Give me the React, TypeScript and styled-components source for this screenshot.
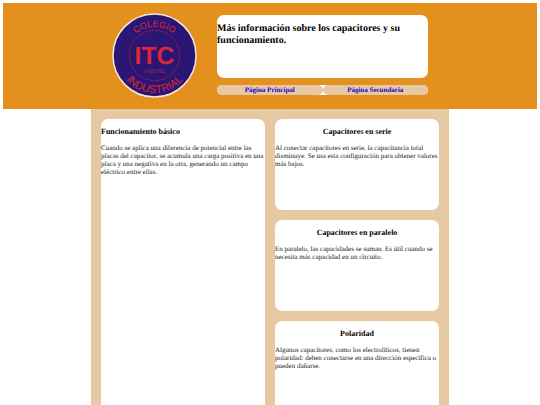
import React from "react";
import styled, { createGlobalStyle } from "styled-components";

const GlobalStyle = createGlobalStyle`
  * { box-sizing: border-box; }
  body {
    margin: 3px 3px 0;
    background: #fff;
    color: #000;
    font-family: "Liberation Serif", "Times New Roman", serif;
    font-size: 7px;
    text-rendering: geometricPrecision;
  }
`;

const Header = styled.header`
  background: #e4901d;
  padding: 10px 0 11px;
`;

const HeaderInner = styled.div`
  display: grid;
  grid-template-columns: 95fr 211fr;
  column-gap: 10px;
  width: 100%;
  max-width: 316px;
  margin: 0 auto;
`;

const Logo = styled.svg`
  display: block;
  width: 85px;
  height: 85px;
  justify-self: start;
`;

const HeaderContent = styled.div`
  display: flex;
  flex-direction: column;
  gap: 7px;
  padding-top: 2px;
`;

const TitleBox = styled.div`
  min-height: 63px;
  padding-top: 8px;
  border-radius: 7px;
  background: #fff;
`;

const Title = styled.h1`
  margin: 0;
  font-size: 10px;
  line-height: 12px;
`;

const Nav = styled.nav`
  display: grid;
  grid-template-columns: 1fr 1fr;
  border-radius: 5px;
  background: #fff;
`;

const NavLink = styled.a`
  border-radius: 5px;
  background: #e6c8a2;
  color: #1a00d0;
  font-weight: bold;
  line-height: 10px;
  text-align: center;
  text-decoration: none;
`;

const Main = styled.main`
  display: grid;
  grid-template-columns: 1fr 1fr;
  gap: 10px;
  align-items: stretch;
  width: 100%;
  max-width: 358px;
  margin: 0 auto;
  padding: 10px;
  background: #e6c8a2;
`;

const Column = styled.div`
  display: flex;
  flex-direction: column;
  gap: 10px;
`;

const Card = styled.article<{ $fill?: boolean }>`
  flex: ${(p) => (p.$fill ? "1" : "none")};
  min-height: 91px;
  padding-top: 8px;
  border-radius: 7px;
  background: #fff;
`;

const CardTitle = styled.h2<{ $centered?: boolean }>`
  margin: 0 0 7px;
  font-size: 8px;
  line-height: 10px;
  text-align: ${(p) => (p.$centered ? "center" : "left")};
`;

const CardText = styled.p`
  margin: 0;
  color: #222;
  line-height: 8px;
`;

const topics = [
  {
    title: "Capacitores en serie",
    text: "Al conectar capacitores en serie, la capacitancia total disminuye. Se usa esta configuración para obtener valores más bajos.",
  },
  {
    title: "Capacitores en paralelo",
    text: "En paralelo, las capacidades se suman. Es útil cuando se necesita más capacidad en un circuito.",
  },
  {
    title: "Polaridad",
    text: "Algunos capacitores, como los electrolíticos, tienen polaridad: deben conectarse en una dirección específica o pueden dañarse.",
  },
];

function SchoolLogo() {
  return (
    <Logo viewBox="0 0 86 86" role="img" aria-label="Colegio Industrial ITC">
      <defs>
        <path id="arc-top" d="M14 43 A29 29 0 0 1 72 43" />
        <path id="arc-bottom" d="M5 43 A38 38 0 0 0 81 43" />
      </defs>
      <circle cx="43" cy="43" r="42" fill="#2b1673" stroke="#f3e9e4" strokeWidth="1.5" />
      <circle cx="43" cy="43" r="25.5" fill="none" stroke="#8d1d50" strokeWidth="0.8" />
      <g fill="#dc2635" fontFamily="Liberation Sans, Arial, sans-serif" textAnchor="middle">
        <text fontSize="9">
          <textPath href="#arc-top" startOffset="50%">COLEGIO</textPath>
        </text>
        <text fontSize="11">
          <textPath href="#arc-bottom" startOffset="50%">INDUSTRIAL</textPath>
        </text>
        <text x="43" y="52" fontSize="25" fontWeight="bold">ITC</text>
        <text x="43" y="61" fontSize="6" fontFamily="Liberation Serif, serif" fill="#c82440">
          I-037/92
        </text>
      </g>
    </Logo>
  );
}

export default function App() {
  return (
    <>
      <GlobalStyle />
      <Header>
        <HeaderInner>
          <SchoolLogo />
          <HeaderContent>
            <TitleBox>
              <Title>Más información sobre los capacitores y su funcionamiento.</Title>
            </TitleBox>
            <Nav>
              <NavLink href="#principal">Página Principal</NavLink>
              <NavLink href="#secundaria">Página Secundaria</NavLink>
            </Nav>
          </HeaderContent>
        </HeaderInner>
      </Header>
      <Main>
        <Column>
          <Card $fill>
            <CardTitle>Funcionamiento básico</CardTitle>
            <CardText>
              Cuando se aplica una diferencia de potencial entre las placas del capacitor, se
              acumula una carga positiva en una placa y una negativa en la otra, generando un campo
              eléctrico entre ellas.
            </CardText>
          </Card>
        </Column>
        <Column>
          {topics.map((topic) => (
            <Card key={topic.title}>
              <CardTitle $centered>{topic.title}</CardTitle>
              <CardText>{topic.text}</CardText>
            </Card>
          ))}
        </Column>
      </Main>
    </>
  );
}
